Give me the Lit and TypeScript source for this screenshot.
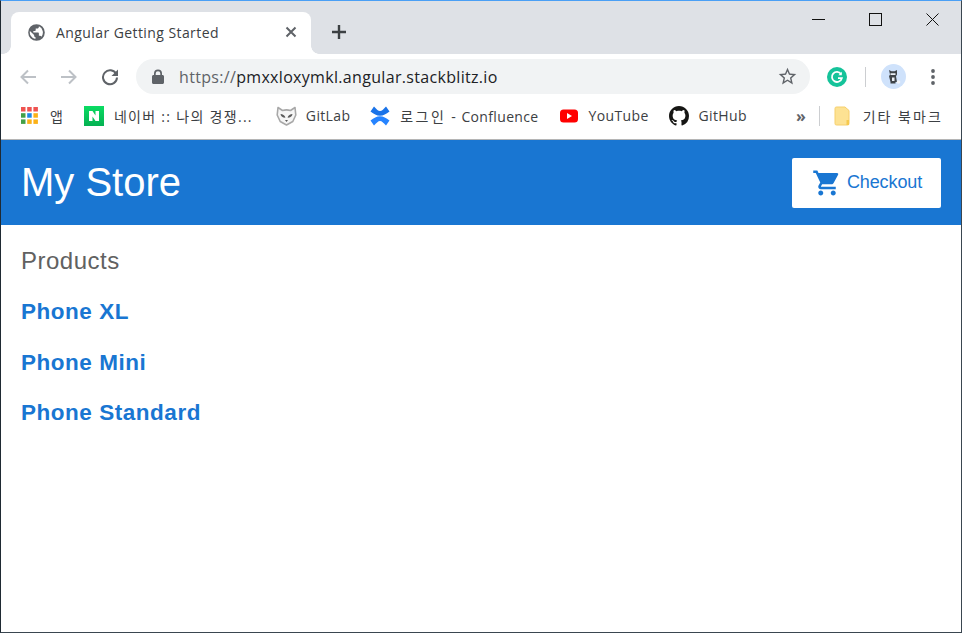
import { LitElement, html, css } from "lit";
import { customElement } from "lit/decorators.js";

@customElement("app-root")
export class AppRoot extends LitElement {
  static styles = css`
    :host { display: block; width: 962px; height: 633px; overflow: hidden; background: #fff; }
    * { box-sizing: border-box; }
    svg { display: block; flex: none; }
    .window { width: 962px; height: 633px; display: flex; flex-direction: column;
      border: 1px solid #1f2a33; border-top: 1px solid #4a9ff5; border-right-color: #3a4650; border-bottom-color:#3a4650; }
    .ui { font-family: "Open Sans", "Noto Sans CJK KR", sans-serif; color: #3c4043; }

    .strip { height: 53px; flex: none; background: #dee1e6; display: flex; align-items: flex-start; padding-left: 10px; }
    .tab { position: relative; margin-top: 11px; width: 300px; height: 42px; background: #fff; border-radius: 8px 8px 0 0;
      display: flex; align-items: center; padding: 0 14px 2px 16px; font-size: 14px; letter-spacing: 0.42px; }
    .tab::before, .tab::after { content: ""; position: absolute; bottom: 0; width: 8px; height: 8px; }
    .tab::before { left: -8px; background: radial-gradient(circle at 0 0, #dee1e6 7.5px, #fff 8px); }
    .tab::after { right: -8px; background: radial-gradient(circle at 100% 0, #dee1e6 7.5px, #fff 8px); }
    .tab-title { margin-left: 10px; flex: 1; color: #3c4043; white-space: nowrap; }
    .newtab { margin: 23px 0 0 20px; }
    .winctl { margin-left: auto; display: flex; margin-top: 10px; padding-right: 22px; gap: 44px; align-items: center; height: 16px; }

    .toolbar { height: 41px; flex: none; background: #fff; display: flex; align-items: center; padding-left: 18px; }
    .nav { display: flex; align-items: center; gap: 23px; margin-top: 4px; }
    .omni { margin-left: 17px; width: 674px; height: 35px; margin-top: 4px; border-radius: 18px; background: #f1f3f4;
      display: flex; align-items: center; padding: 0 12px 0 16px; }
    .omni .url { margin-left: 15px; flex: 1; color: #202124; white-space: nowrap; font-family: "Open Sans", sans-serif; font-size: 16px; letter-spacing: 0.32px; }
    .omni .scheme { color: #5f6368; }
    .tools { display: flex; align-items: center; margin-top: 4px; }

    .bookmarks { height: 45px; flex: none; background: #fff; border-bottom: 1px solid #b5b5b5; display: flex; align-items: center;
      font-size: 14px; padding: 0 0 3px 20px; white-space: nowrap; color: #3c4043; }
    .bm { display: flex; align-items: center; gap: 10px; }
    .lat { letter-spacing: 0.35px; }
    .dash { word-spacing: 1.2px; }
    .nv { letter-spacing: 1.3px; }
    .log { letter-spacing: 2.4px; }
    .etc { letter-spacing: 2px; }
    .sep { width: 1px; height: 20px; background: #ccced1; }
    .more { margin-left: 49px; font-size: 16px; font-weight: 700; color: #5f6368; line-height: 1; }

    .header { height: 85px; flex: none; background: #1976d2; display: flex; align-items: center; justify-content: space-between;
      padding: 0 20px; font-family: "Liberation Sans", Arial, sans-serif; }
    .header h1 { margin: -2px 0 0; font-size: 40px; font-weight: 400; color: #fff; line-height: 46px; }
    .checkout { width: 149px; height: 50px; background: #fff; border-radius: 2px; display: flex; align-items: center; justify-content: center; gap: 5px;
      padding-left: 1px; color: #1976d2; font-size: 18px; letter-spacing: -0.1px; }

    .content { flex: 1; padding: 22px 20px; font-family: "Liberation Sans", Arial, sans-serif; }
    h2 { margin: 0 0 23px; font-size: 24px; font-weight: 400; line-height: 28px; letter-spacing: 0.5px; color: #616161; }
    h3 { margin: 0; font-size: 22.5px; font-weight: 700; line-height: 28px; height: 50.6px; letter-spacing: 0.53px; color: #1976d2; }
  `;

  render() {
    return html`
      <div class="window">
        <div class="strip ui">
          <div class="tab">
            <svg width="19" height="19" viewBox="0 0 24 24" fill="#5f6368"><path d="M12 1.500a10.500 10.500 0 1 0 0 21 10.500 10.500 0 0 0 0-21zm-1.500 18.600A8.500 8.500 0 0 1 3.700 10L9 15v1c0 1.100.9 2 2 2zm7.700-2.800c-.3-.8-1-1.300-1.900-1.300h-1.300v-3c0-.6-.4-1-1-1H8v-2h2c.6 0 1-.4 1-1V7h2c1.100 0 2-.9 2-2v-.8a8.500 8.500 0 0 1 3.200 13.100z"/></svg>
            <span class="tab-title">Angular Getting Started</span>
            <svg width="12" height="12" viewBox="0 0 12 12" stroke="#5f6368" stroke-width="2"><path d="M1.500 1.500l9 9M10.500 1.500l-9 9"/></svg>
          </div>
          <svg class="newtab" width="16" height="16" viewBox="0 0 16 16" stroke="#3c4043" stroke-width="2.400"><path d="M8 1v14M1 8h14"/></svg>
          <div class="winctl">
            <svg width="13" height="13" viewBox="0 0 13 13" stroke="#111" stroke-width="1"><path d="M0 6.500h13"/></svg>
            <svg width="13" height="13" viewBox="0 0 13 13" stroke="#111" stroke-width="1" fill="none"><rect x=".5" y=".5" width="12" height="12"/></svg>
            <svg width="13" height="13" viewBox="0 0 13 13" stroke="#111" stroke-width="1"><path d="M.5.5l12 12M12.500.5l-12 12"/></svg>
          </div>
        </div>

        <div class="toolbar ui">
          <div class="nav">
            <svg width="18" height="18" viewBox="0 0 18 18" fill="none" stroke="#bdc1c6" stroke-width="2"><path d="M17 9H2.500M9 2.500L2.500 9 9 15.500"/></svg>
            <svg width="18" height="18" viewBox="0 0 18 18" fill="none" stroke="#bdc1c6" stroke-width="2"><path d="M1 9h14.500M9 2.500L15.500 9 9 15.500"/></svg>
            <svg width="18" height="18" viewBox="0 0 18 18" fill="none"><path d="M15.200 6A7 7 0 1 0 16 9.500" stroke="#5f6368" stroke-width="2"/><path d="M17 1.500V8h-6.500z" fill="#5f6368"/></svg>
          </div>
          <div class="omni">
            <svg width="12" height="15" viewBox="0 0 12 15" fill="#5f6368"><path d="M2 6V4.500a4 4 0 0 1 8 0V6h.5c.8 0 1.500.7 1.500 1.500v6c0 .8-.7 1.500-1.500 1.500h-9C.7 15 0 14.300 0 13.500v-6C0 6.700.7 6 1.500 6zm1.700 0h4.600V4.500a2.300 2.300 0 0 0-4.600 0z"/></svg>
            <span class="url"><span class="scheme">https://</span>pmxxloxymkl.angular.stackblitz.io</span>
            <svg width="21" height="21" viewBox="0 0 24 24" fill="#5f6368"><path d="M22 9.240l-7.190-.62L12 2 9.190 8.630 2 9.240l5.460 4.730L5.820 21 12 17.270 18.180 21l-1.630-7.030L22 9.240zM12 15.400l-3.760 2.270 1-4.280-3.320-2.880 4.380-.38L12 6.100l1.710 4.040 4.380.38-3.320 2.880 1 4.280L12 15.400z"/></svg>
          </div>
          <div class="tools">
            <svg style="margin-left:17px" width="20" height="20" viewBox="0 0 20 20" fill="none"><circle cx="10" cy="10" r="10" fill="#15c39a"/><path d="M14 7a5 5 0 1 0 .8 4.200H11" stroke="#fff" stroke-width="1.800"/><path d="M14.800 4.800v3.400h-3.400z" fill="#fff"/></svg>
            <div class="sep" style="margin-left:18px"></div>
            <svg style="margin-left:15px" width="25" height="25" viewBox="0 0 25 25"><circle cx="12.500" cy="12.500" r="12.500" fill="#cfe2fb"/><path d="M8 6l2.500 1.200h3L16 6v4.500l-1 1.800 1 5.700h-1.500v1.500h-5V18L8 12.300l1-1.800z" fill="#3f4449"/><path d="M9.500 9.200h5V11h-5zM11 13.500h2.500v3.500H11z" fill="#e9eef5"/><circle cx="17.500" cy="18" r="1.800" fill="#f3f5f8"/></svg>
            <svg style="margin-left:25px" width="4" height="16" viewBox="0 0 4 16" fill="#5f6368"><circle cx="2" cy="2" r="1.900"/><circle cx="2" cy="8" r="1.900"/><circle cx="2" cy="14" r="1.900"/></svg>
          </div>
        </div>

        <div class="bookmarks ui">
          <div class="bm">
            <svg width="17" height="17" viewBox="0 0 17 17">
              <rect width="4.500" height="4.500" fill="#ef5350"/><rect x="6.200" width="4.500" height="4.500" fill="#ef5350"/><rect x="12.400" width="4.500" height="4.500" fill="#ef5350"/>
              <rect y="6.200" width="4.500" height="4.500" fill="#43a047"/><rect x="6.200" y="6.200" width="4.500" height="4.500" fill="#1e88e5"/><rect x="12.400" y="6.200" width="4.500" height="4.500" fill="#fbb117"/>
              <rect y="12.400" width="4.500" height="4.500" fill="#43a047"/><rect x="6.200" y="12.400" width="4.500" height="4.500" fill="#fbb117"/><rect x="12.400" y="12.400" width="4.500" height="4.500" fill="#fbb117"/>
            </svg>
            <span style="margin-left:2px">앱</span>
          </div>
          <div class="bm" style="margin-left:21px">
            <svg width="20" height="20" viewBox="0 0 20 20"><defs><linearGradient id="nv" x1="0" y1="0" x2="0" y2="1"><stop offset="0" stop-color="#0bdc63"/><stop offset="1" stop-color="#04b152"/></linearGradient></defs><rect width="20" height="20" fill="url(#nv)"/><path d="M5 5h3.500l3 4.500V5H15v10h-3.500l-3-4.500V15H5z" fill="#fff"/></svg>
            <span class="nv">네이버 :: 나의 경쟁...</span>
          </div>
          <div class="bm" style="margin-left:23px;gap:9px">
            <svg width="21" height="20" viewBox="0 0 21 20"><path d="M2 1.500l4.500 3c2.500-.8 5.500-.8 8 0l4.500-3 .8 7.500-3 6.500-6.300 3.500-6.300-3.500-3-6.500z" fill="#f6f6f6" stroke="#a8a8a8" stroke-width="1.600" stroke-linejoin="round"/><path d="M4.500 8c2.200.2 4.200 1.300 5 3.500-2.800.6-4.600-1-5-3.500zM16.500 8c-2.200.2-4.200 1.300-5 3.500 2.800.6 4.600-1 5-3.500z" fill="#5c5c5c"/><path d="M9 14h3l-1.500 2z" fill="#5c5c5c"/></svg>
            <span class="lat">GitLab</span>
          </div>
          <div class="bm" style="margin-left:20px">
            <svg width="20" height="20" viewBox="0 0 20 20"><path d="M.5 5.500L4 .5C7 3.500 8 5 10 5s3-1.500 6-4.500l3.500 5C16 8 13.500 9.700 10 9.700S4 8 .5 5.500z" fill="#1a73e8"/><path d="M.5 14.500L4 19.500C7 16.500 8 15 10 15s3 1.500 6 4.500l3.500-5C16 12 13.500 10.300 10 10.300S4 12 .5 14.500z" fill="#2684ff"/></svg>
            <span><span class="log">로그인</span><span class="lat dash"> - Confluence</span></span>
          </div>
          <div class="bm" style="margin-left:21px;gap:11px">
            <svg width="18" height="14" viewBox="0 0 18 14"><rect width="18" height="13" y=".5" rx="3.500" fill="#f00"/><path d="M7 4l5 3-5 3z" fill="#fff"/></svg>
            <span class="lat">YouTube</span>
          </div>
          <div class="bm" style="margin-left:20px">
            <svg width="20" height="20" viewBox="0 0 16 16" fill="#161614"><path d="M8 0C3.580 0 0 3.580 0 8c0 3.540 2.290 6.530 5.470 7.590.4.070.55-.17.55-.38 0-.19-.01-.82-.01-1.490-2.010.37-2.530-.49-2.690-.94-.09-.23-.48-.94-.82-1.130-.28-.15-.68-.52-.01-.53.630-.01 1.080.58 1.230.82.720 1.210 1.870.87 2.330.66.070-.52.280-.87.510-1.070-1.780-.2-3.640-.89-3.640-3.950 0-.87.310-1.590.82-2.150-.08-.2-.36-1.020.08-2.120 0 0 .67-.21 2.200.82.640-.18 1.320-.27 2-.27s1.360.09 2 .27c1.530-1.040 2.200-.82 2.200-.82.440 1.100.16 1.920.08 2.120.51.560.82 1.270.82 2.150 0 3.070-1.870 3.750-3.650 3.950.29.250.54.730.54 1.480 0 1.070-.01 1.930-.01 2.200 0 .21.150.46.550.38A8.010 8.010 0 0 0 16 8c0-4.420-3.580-8-8-8z"/></svg>
            <span class="lat">GitHub</span>
          </div>
          <span class="more">»</span>
          <div class="sep" style="margin-left:13px"></div>
          <div class="bm" style="margin-left:14px;gap:13px">
            <svg width="16" height="20" viewBox="0 0 16 20"><path d="M1 2.500C1 1.500 1.500 1 2.500 1H11l4 3.500v13c0 1-.5 1.500-1.500 1.500h-11C1.500 19 1 18.500 1 17.500z" fill="#fde293" stroke="#f6cf6c"/><rect x="12.500" y="14" width="2.500" height="5" fill="#f6c94e"/></svg>
            <span class="etc">기타 북마크</span>
          </div>
        </div>

        <div class="header">
          <h1>My Store</h1>
          <div class="checkout">
            <svg width="30" height="30" viewBox="0 0 24 24" fill="#1976d2"><path d="M7 18c-1.100 0-1.990.9-1.990 2S5.900 22 7 22s2-.9 2-2-.9-2-2-2zM1 2v2h2l3.600 7.590-1.350 2.450c-.16.280-.25.610-.25.960 0 1.100.9 2 2 2h12v-2H7.420c-.14 0-.25-.11-.25-.25l.03-.12.9-1.630h7.450c.75 0 1.410-.41 1.750-1.030l3.580-6.490A1 1 0 0 0 20 4H5.210l-.94-2H1zm16 16c-1.100 0-1.990.9-1.990 2s.89 2 1.990 2 2-.9 2-2-.9-2-2-2z"/></svg>
            <span>Checkout</span>
          </div>
        </div>

        <div class="content">
          <h2>Products</h2>
          <h3>Phone XL</h3>
          <h3>Phone Mini</h3>
          <h3>Phone Standard</h3>
        </div>
      </div>
    `;
  }
}
